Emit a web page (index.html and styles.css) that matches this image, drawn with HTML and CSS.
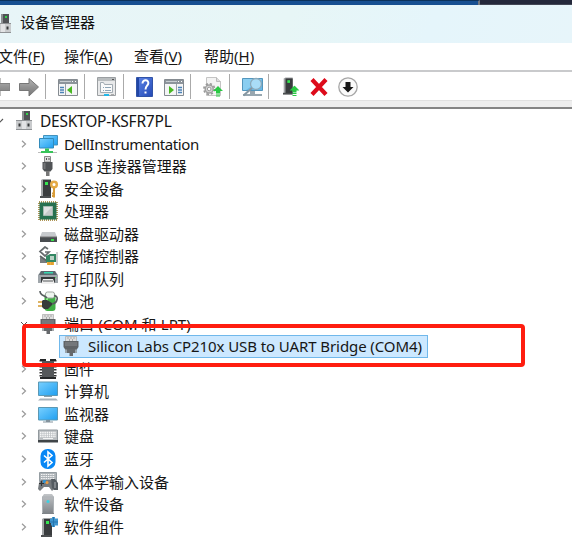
FILE: index.html
```html
<!DOCTYPE html>
<html lang="zh-CN">
<head>
<meta charset="utf-8">
<title>设备管理器</title>
<link rel="stylesheet" href="styles.css">
</head>
<body>
<svg class="defs" aria-hidden="true">
  <defs>
    <linearGradient id="screen" x1="0" y1="0" x2="1" y2="1"><stop offset="0" stop-color="#79d0ff"/><stop offset="1" stop-color="#1f9ff0"/></linearGradient>
    <linearGradient id="metal" x1="0" y1="0" x2="0" y2="1"><stop offset="0" stop-color="#c2c5c8"/><stop offset="1" stop-color="#7d8287"/></linearGradient>
    <linearGradient id="arrow" x1="0" y1="0" x2="0" y2="1"><stop offset="0" stop-color="#b5b5b5"/><stop offset=".5" stop-color="#929292"/><stop offset="1" stop-color="#777"/></linearGradient>
    <linearGradient id="help" x1="0" y1="0" x2="1" y2="1"><stop offset="0" stop-color="#5f86e8"/><stop offset="1" stop-color="#2349b5"/></linearGradient>
    <symbol id="chev" viewBox="0 0 6 8"><path d="M1 .8 4.500 4 1 7.200" fill="none" stroke="#9a9a9a" stroke-width="1.200"/></symbol>
    <symbol id="root" viewBox="0 0 18 20"><path d="M7 0h8v10H7z" fill="#505356"/><path d="M7 0h2v10H7z" fill="#8d9093"/><path d="M11 2h2v2h-2z" fill="#34d34c"/><path d="M1 9h16v10H1z" fill="#c9cbcd"/><path d="M1 9h16v1H1zM1 18h16v1H1z" fill="#8f9295"/><path d="M3.500 12.500h2v3h-2zM12.500 12.500h2v3h-2z" fill="#36383a"/><path d="M7 10h4v8H7z" fill="#e2e3e5"/></symbol>
    <symbol id="port" viewBox="0 0 20 20"><path d="M4.500.5h11V6h-11z" fill="#ddd" stroke="#aaa" stroke-width=".7"/><path d="M6.500 1.500h1v1h-1zm3 0h1v1h-1zm3 0h1v1h-1zM8 3.500h1v1H8zm3 0h1v1h-1z" fill="#777"/><path d="M2.500 5h15v6l-2 3h-11l-2-3z" fill="#606366"/><path d="M4 7h12M4 9h12" stroke="#898c8f"/><path d="M6 13h8v4H6zM8.500 17h3.500v3H8.500z" fill="#66696c"/><path d="M5 13v4m10-4v4" stroke="#8b8e91" stroke-width="1.500"/></symbol>
    <symbol id="tower" viewBox="0 0 20 20"><path d="M3 1 5 0h8v18H3z" fill="#a1a4a6"/><path d="M5 1h8v17H5z" fill="#393c3e"/><path d="M7 3h3v3H7z" fill="#35e650"/><path d="M2 17h11v2H2z" fill="#4b4e50"/></symbol>
    <symbol id="up" viewBox="0 0 10 11"><path d="M5 0 10 5H7v2H3V5H0z" fill="#29c943"/><path d="M3 7.500h4v1H3zM3 9.500h4v1H3z" fill="#29c943"/></symbol>
  </defs>
</svg>

<div class="desktop"><div class="desktop-blue"></div></div>
<header class="title-bar">
  <svg class="title-icon" viewBox="0 0 18 20"><use href="#root"/></svg>
  <h1>设备管理器</h1>
</header>
<nav class="menu">
  <span class="m-file">文件(<u>F</u>)</span><span class="m-action">操作(<u>A</u>)</span><span class="m-view">查看(<u>V</u>)</span><span class="m-help">帮助(<u>H</u>)</span>
</nav>
<div class="toolbar">
  <div class="group nav-group">
    <svg width="20" height="20" viewBox="0 0 20 20"><path d="M20 6.500H10V1L1 10l9 9v-5.500h10z" fill="url(#arrow)" stroke="#808080"/></svg>
    <svg width="20" height="20" viewBox="0 0 20 20"><path d="M.5 6.500H10V1.500L19.500 10 10 19v-5.500H.5z" fill="url(#arrow)" stroke="#777"/></svg>
  </div>
  <div class="group one">
    <svg width="20" height="20" viewBox="0 0 20 20"><path d="M.5 2.500h19v16H.5z" fill="#f4f5f6" stroke="#858b91"/><path d="M1 3h18v4H1z" fill="#8c949b"/><path d="M2 4.500h11" stroke="#c8cdd1"/><path d="M14 4h1v1h-1zm3 0h1v1h-1z" fill="#fff"/><path d="M7.500 7v11" stroke="#9aa2a8"/><path d="M2 10.500h4M2 13h4M2 15.500h4" stroke="#4b83b8" stroke-width="1.300"/><path d="M14 9v8l-5-4z" fill="#48b822"/></svg>
  </div>
  <div class="group one">
    <svg width="20" height="20" viewBox="0 0 20 20"><path d="M.5.5h18v18H.5z" fill="#e8e9ea" stroke="#9b9fa2"/><path d="M1 1h17v3H1z" fill="#b9bdbf"/><path d="M15 2h2v1h-2z" fill="#555"/><path d="M3.500 5.500h3l1 2h8v8h-12z" fill="#fafafa" stroke="#a2abb2"/><path d="M6 10.500h1M8 10.500h6M6 13.500h1M8 13.500h6" stroke="#8ca4b6"/><path d="M7 17h5v2H7z" fill="#22b7e8"/><path d="M14 17h3v1h-3z" fill="#aaa"/></svg>
  </div>
  <div class="group help-group">
    <svg width="18" height="20" viewBox="0 0 18 20"><path d="M.5.5h16v19H.5z" fill="url(#help)" stroke="#3153a7"/><path d="M1 1h2v18H1z" fill="#2146a5"/><path d="M6.500 6.500C6.500 1.800 13 2.600 12.300 6.500 11.900 8.700 9.500 9 9.500 12.500" fill="none" stroke="#fff" stroke-width="2"/><path d="M8.500 14.500h2v2h-2z" fill="#fff"/></svg>
    <svg width="20" height="20" viewBox="0 0 20 20"><path d="M.5 2.500h19v16H.5z" fill="#f4f5f6" stroke="#858b91"/><path d="M1 3h18v4H1z" fill="#8c949b"/><path d="M2 4.500h11" stroke="#c8cdd1"/><path d="M14 4h1v1h-1zm3 0h1v1h-1z" fill="#fff"/><path d="M12.500 7v11" stroke="#9aa2a8"/><path d="M14 10.500h4M14 13h4M14 15.500h4" stroke="#4b83b8" stroke-width="1.300"/><path d="M5 9v8l5-4z" fill="#48b822"/></svg>
  </div>
  <div class="group one">
    <svg width="20" height="20" viewBox="0 0 20 20"><path d="M3.500.5h10l4 4v14h-14z" fill="#f3f3f3" stroke="#c4c4c4"/><path d="M13.500.5v4h4" fill="#ddd" stroke="#bbb"/><circle cx="6.200" cy="12" r="4" fill="#d4d4d4" stroke="#a0a0a0" stroke-width="1.500"/><circle cx="6.200" cy="12" r="5.300" fill="none" stroke="#999" stroke-width="1.700" stroke-dasharray="2.200 1.960"/><circle cx="6.200" cy="12" r="1.800" fill="#fff" stroke="#999"/><use href="#up" x="10" y="9" width="10" height="11"/></svg>
  </div>
  <div class="group one">
    <svg width="22" height="20" viewBox="0 0 22 20"><path d="M.5 1.500h20v12H.5z" fill="#66b9e9" stroke="#5396bd"/><path d="M1 2h19L4 13H1z" fill="#8acef1"/><path d="M8 14h5v3H8zM1 17h19v2H1z" fill="#98a7b0"/><circle cx="14" cy="7" r="5.500" fill="#a9dcf7" stroke="#8ba9ba" stroke-width="1.300"/><path d="m10 11-8.500 7.500" stroke="#8797a2" stroke-width="2"/></svg>
  </div>
  <div class="group actions">
    <svg width="18" height="20" viewBox="0 0 18 20"><use href="#tower" x="-2" width="18" height="19"/><use href="#up" x="6.500" y="8.500" width="10" height="11"/></svg>
    <svg width="18" height="20" viewBox="0 0 18 20"><path d="m2 2.500 14 15m0-15-14 15" stroke="#dd0b1b" stroke-width="4.200"/></svg>
    <svg width="20" height="20" viewBox="0 0 20 20"><circle cx="10" cy="10" r="9.200" fill="#fafafa" stroke="#a6a6a6" stroke-width="1.300"/><path d="M7.500 5h5v5H15.500L10 15.500 4.500 10h3z" fill="#171717"/></svg>
  </div>
</div>
<div class="strip"></div>
<main class="tree">
  <div class="row root-row"><svg class="open" viewBox="0 0 8 6"><path d="M0 1 3.500 4.500 7 1" fill="none" stroke="#555" stroke-width="1.200"/></svg><svg class="root-icon" viewBox="0 0 18 20"><use href="#root"/></svg><span class="desk-name">DESKTOP-KSFR7PL</span></div>
  <div class="row"><svg class="chev"><use href="#chev"/></svg><svg class="icon" viewBox="0 0 20 20"><path d="M5.500 1.500h14v9.500h-14z" fill="url(#screen)" stroke="#4292bd"/><path d="M1.500 4.500h14v9.500h-14z" fill="url(#screen)" stroke="#328bbb"/><path d="M7 14.500h4V17h4v2H3v-2h4z" fill="#37c459"/><path d="M0 18.500h3m12 0h4" stroke="#bbb"/></svg><span class="dell">DellInstrumentation</span></div>
  <div class="row"><svg class="chev"><use href="#chev"/></svg><svg class="icon" viewBox="0 0 20 20"><path d="M6.500.5h6V6h-6z" fill="#ddd" stroke="#888"/><path d="M8 2h1v2H8zm2.500 0h1v2h-1z" fill="#555"/><path d="M4.500 6h10v7l-2 2.500h-6l-2-2.500z" fill="#505356"/><path d="M8 15h3.500v5H8z" fill="#777"/><path d="M5.500 7h2v6h-2z" fill="#747779"/></svg><span>USB 连接器管理器</span></div>
  <div class="row"><svg class="chev"><use href="#chev"/></svg><svg class="icon" viewBox="0 0 20 20"><use href="#tower"/><circle cx="16" cy="5.500" r="2.800" fill="none" stroke="#e4aa47" stroke-width="2.500"/><path d="M16 8.500v10m-2-4h2m-2 2.500h2" stroke="#d99d39" stroke-width="2"/></svg><span>安全设备</span></div>
  <div class="row"><svg class="chev"><use href="#chev"/></svg><svg class="icon" viewBox="0 0 20 20"><path d="M1 1h18v18H1z" fill="none" stroke="#af9656" stroke-width="2" stroke-dasharray="1 1"/><path d="M1.500 1.500h17v17h-17z" fill="#28714f"/><path d="M5.500 5.500h9v9h-9z" fill="#e1e3e2" stroke="#a7bbb1"/><path d="m14 6-8 8h8z" fill="#c7cbca"/></svg><span>处理器</span></div>
  <div class="row"><svg class="chev"><use href="#chev"/></svg><svg class="icon" viewBox="0 0 20 20"><path d="m4 8-2 5h17l-2-5z" fill="#c7cacd"/><path d="M2 13h17v5H2z" fill="#494d50"/><path d="M2 13h17" stroke="#777"/><path d="M13 15h3v2h-3z" fill="#36dd48"/></svg><span>磁盘驱动器</span></div>
  <div class="row"><svg class="chev"><use href="#chev"/></svg><svg class="icon" viewBox="0 0 20 20"><path d="M10 3 7 1 2 5.500 7 10l4-4H7" fill="none" stroke="#666b6d" stroke-width="1.700"/><path d="M2 11v6h7v-3z" fill="#787d7f"/><path d="m2 10 7 5" stroke="#5e6365" stroke-width="1.600"/><path d="m8 10 4-2h6v8H8z" fill="#338763"/><path d="M19 6v13" stroke="#9c9ea0"/><path d="M12 10h4v4h-4z" fill="#b9d0c3"/><path d="M9 16h7v3H9z" fill="#efae38"/><path d="M11 16v3m3-3v3" stroke="#d5922e"/></svg><span>存储控制器</span></div>
  <div class="row"><svg class="chev"><use href="#chev"/></svg><svg class="icon" viewBox="0 0 20 20"><path d="m3 2-3 4v8h20V6l-3-4z" fill="#a0a6ab"/><path d="M3 2h14l2 4H1z" fill="#5c6870"/><path d="M6 3h9v1.500H6z" fill="#35d7b0"/><path d="M3 8h14v6H3z" fill="#34383b"/><path d="m5 10-2 5h14l-2-5z" fill="#f0f0f0"/><path d="M5 11.500h10v1H5z" fill="#54585b"/><path d="M17 8h1v1h-1z" fill="#48db5b"/></svg><span>打印队列</span></div>
  <div class="row"><svg class="chev"><use href="#chev"/></svg><svg class="icon" viewBox="0 0 20 20"><rect x="6.500" y="2" width="11" height="18" rx="3" fill="#3eae43"/><rect x="7.500" y="1" width="9" height="6" rx="2" fill="#eef5ef" stroke="#9fa5a0"/><path d="M9 7v8" stroke="#8ce285" stroke-width="2"/><path d="M2 0c0 5 5 4 7 7m7-2c5-1 4 7-2 8" fill="none" stroke="#575d5e" stroke-width="1.600"/><path d="M0 11h5m-5 4h5" stroke="#d49a30" stroke-width="1.500"/><path d="M5 9h4l5 3v2l-4 4H6l-2-2v-6z" fill="#373b3b"/></svg><span>电池</span></div>
  <div class="row"><svg class="chev"><path d="M0 2 3 5 6 2" fill="none" stroke="#555"/></svg><svg class="icon"><use href="#port"/></svg><span class="com">端口 (COM 和 LPT)</span></div>
  <div class="row"><div class="selected"><svg class="icon"><use href="#port"/></svg><span class="bridge">Silicon Labs CP210x USB to UART Bridge (COM4)</span></div></div>
  <div class="row"><svg class="chev"><use href="#chev"/></svg><svg class="icon" viewBox="0 0 20 20"><path d="M3 1v18M17 1v18" stroke="#333" stroke-width="3" stroke-dasharray="1.500 1.500"/><path d="M4 2h12v16H4z" fill="#55585a"/><path d="M2 0h6v2H2zm10 0h6v2h-6zM2 18h16v2H2z" fill="#252728"/></svg><span>固件</span></div>
  <div class="row"><svg class="chev"><use href="#chev"/></svg><svg class="icon" viewBox="0 0 20 20"><path d="M.5 1h19v13.500H.5z" fill="url(#screen)" stroke="#5b98b4"/><path d="M6 15h8v1H6z" fill="#8aa0ac"/><path d="M2 17.500h16l2 2H0z" fill="#a7b2ba"/></svg><span>计算机</span></div>
  <div class="row"><svg class="chev"><use href="#chev"/></svg><svg class="icon" viewBox="0 0 20 20"><path d="M.5 3.500h19V16H.5z" fill="url(#screen)" stroke="#5b98b4"/><path d="M8 16h4v1.500h3v1H5v-1h3z" fill="#83939d"/></svg><span>监视器</span></div>
  <div class="row"><svg class="chev"><use href="#chev"/></svg><svg class="icon" viewBox="0 0 20 20"><path d="M.5 4h19v11H.5z" fill="#b9bdc0" stroke="#92999d"/><path d="M2 6.500h16M2 8.500h16M2 10.500h16" stroke="#f6f7f7" stroke-width="1.300" stroke-dasharray="1.500 .7"/><path d="M5 12.500h10" stroke="#f3f4f4"/><path d="M0 14h20v2.500H0z" fill="#404548"/></svg><span>键盘</span></div>
  <div class="row"><svg class="chev"><use href="#chev"/></svg><svg class="icon" viewBox="0 0 20 20"><rect x="2.500" width="15" height="20" rx="7" fill="#0787f5"/><path d="m6 6.500 8 7-4 3.500V3l4 3.500-8 7" fill="none" stroke="#fff" stroke-width="1.600"/></svg><span>蓝牙</span></div>
  <div class="row"><svg class="chev"><use href="#chev"/></svg><svg class="icon" viewBox="0 0 20 20"><path d="M1.500.5h17v9h-17z" fill="#aeb4b8" stroke="#959da2"/><path d="M3 2.500h14M3 4.500h14M3 6.500h14" stroke="#f5f5f5" stroke-dasharray="1.500 .8"/><path d="M3 8h10l2 3 1 6-2 2-3-4H6l-4 4-2-2 1-6z" fill="#74797d"/><path d="M3.500 9v5M1 11.500h5" stroke="#303437"/><path d="M5 8h3v3H5z" fill="#3390ce"/><circle cx="9" cy="10.500" r="1.500" fill="#ed9c40"/><path d="M13 7h4l3 4v7h-4l-2-2z" fill="#545b61"/><path d="M17 10v6" stroke="#adb3b7"/></svg><span>人体学输入设备</span></div>
  <div class="row"><svg class="chev"><use href="#chev"/></svg><svg class="icon" viewBox="0 0 20 20"><path d="M6 0h8l2 3v17H4V3z" fill="url(#metal)"/><path d="M4 3h12M4.500 3v16M15.500 3v16" stroke="#adb2b6"/><circle cx="10" cy="7.500" r="1.500" fill="#39d1e4"/></svg><span>软件设备</span></div>
  <div class="row"><svg class="chev"><use href="#chev"/></svg><svg class="icon" viewBox="0 0 20 20"><use href="#tower" x="1" y="1"/><path d="M12 1.500h2V0h3v1.500h3v7h-3V10h-3V8.500h-1V6h-1z" fill="#3f96cf"/><path d="M12 5h8M15.500 0v10" stroke="#2675af"/></svg><span>软件组件</span></div>
  <div class="highlight"></div>
</main>
</body>
</html>
```

FILE: styles.css
```css
* { box-sizing: border-box; }
body {
  margin: 0;
  width: 572px;
  height: 539px;
  overflow: hidden;
  background: #fff;
  color: #161616;
  font: 15px "Noto Sans", "Noto Sans CJK SC", sans-serif;
}
svg { display: block; flex: none; }
.defs { position: absolute; width: 0; height: 0; }
.desktop { height: 5px; background: #24283b; border-bottom: 1px solid #424655; }
.desktop-blue {
  width: 480px;
  height: 5px;
  background: #174f91;
  border-top: 1px solid #0b315b;
  border-right: 2px solid #74767d;
}
.title-bar {
  height: 38px;
  display: flex;
  align-items: center;
  background: linear-gradient(110deg, #e8f5f8, #e7f6f6 50%, #e5f5fb 75%, #e7f5fa);
}
.title-icon { width: 18px; height: 20px; margin-left: -6px; }
h1 { margin: 0 0 4px 8px; font-size: 15px; line-height: 22px; font-weight: 400; color: #111; }
.menu { height: 27px; display: flex; align-items: center; white-space: nowrap; line-height: 22px; padding-bottom: 1px; }
.menu span { flex: none; }
.menu u { text-underline-offset: 2px; text-decoration-thickness: 1px; }
.m-file { width: 66px; margin-left: -2px; }
.m-action { width: 70px; }
.m-view { width: 70px; }
.toolbar { height: 30px; border-top: 2px solid #c9cacc; display: flex; align-items: center; padding-top: 1px; }
.group { height: 25px; display: flex; align-items: center; flex: none; border-right: 1px solid #aaa; }
.nav-group { width: 46px; gap: 9px; }
.nav-group svg:first-child { margin-left: -10px; }
.one { width: 39px; padding-left: 12px; }
.help-group { width: 67px; padding-left: 12px; gap: 10px; }
.actions { border: 0; padding-left: 14px; gap: 9px; }
.actions svg:last-child { margin-left: 1px; }
.strip { height: 9px; background: #eee; border-top: 1px solid #e1e1e1; border-bottom: 2px solid #858585; }
.tree { position: relative; padding-top: 1px; }
.row { height: 22.53px; display: flex; align-items: center; white-space: nowrap; padding-left: 21px; }
.row span { line-height: 22px; }
.chev { width: 6px; height: 8px; margin-right: 11px; }
.icon { width: 20px; height: 20px; margin-right: 6px; }
.root-row { padding-left: 0; }
.open { width: 8px; height: 6px; margin: 0 10px 0 -4px; }
.root-icon { width: 18px; height: 20px; margin: 0 8px 0 1px; }
.desk-name { font-size: 15.5px; letter-spacing: -.23px; margin-left: -1px; }
.dell { letter-spacing: -.42px; }
.com { letter-spacing: .1px; }
.bridge { letter-spacing: -.09px; }
.selected {
  display: flex;
  align-items: center;
  width: 369px;
  height: 23px;
  margin-left: 38px;
  border: 1px solid #70b8eb;
  background: #cce8ff;
}
.selected .icon { margin: 0 7px 0 1px; }
.highlight { position: absolute; left: 22px; top: 215px; width: 503px; height: 43px; border: 4px solid #ff1d0f; border-radius: 4px; }
```
